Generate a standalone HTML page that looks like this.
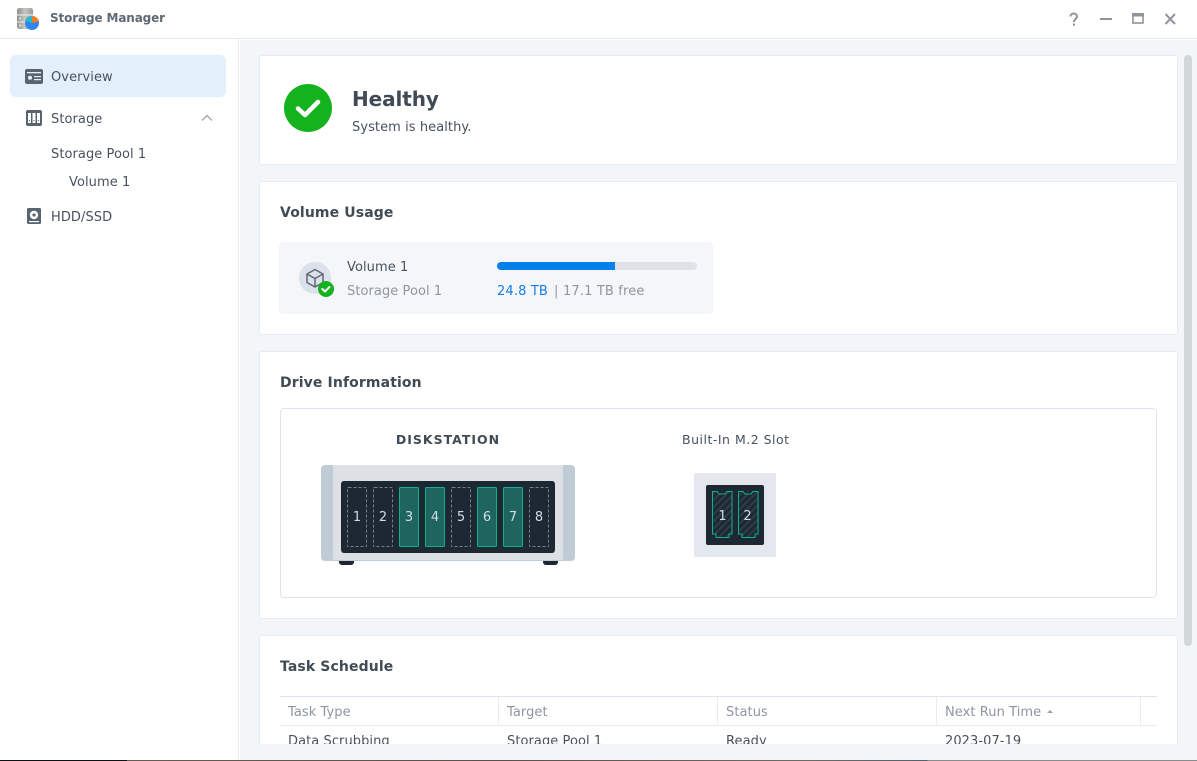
<!DOCTYPE html>
<html><head><meta charset="utf-8"><style>
*{box-sizing:border-box}
html,body{margin:0;padding:0;width:1197px;height:761px;overflow:hidden;background:#fff}
body{font-family:"DejaVu Sans","Liberation Sans",sans-serif;font-size:13px;letter-spacing:.07px;color:#414b55;position:relative}
.a{position:absolute;white-space:nowrap}
.card{position:absolute;left:259px;width:919px;background:#fff;border:1px solid #e6ecf2;border-radius:3px}
.h{font-weight:bold;font-size:14px;letter-spacing:.12px;color:#414b55;line-height:18px}
.bay{position:absolute;top:6px;width:20px;height:60px;border-radius:1.500px;color:#d3dbe3;font-size:13px;letter-spacing:0;text-align:center;line-height:60px}
.e{border:1px dashed #77808a}
.f{border:1px solid #0db08f;background:#1e655f}
.th{position:absolute;top:697px;height:29px;line-height:31px;color:#8e969e;padding-left:8px;border-right:1px solid #e6ecf2}
</style></head><body>
<div class="a" style="left:0;top:0;width:1197px;height:39px;background:#fff;border-bottom:1px solid #e3e9f0"></div>
<svg class="a" style="left:16px;top:7px" width="24" height="24" viewBox="0 0 24 24">
<defs><linearGradient id="g" x1="0" x2="1" y1="0" y2="0"><stop offset="0" stop-color="#8f8f8c"/><stop offset=".5" stop-color="#c6c6c2"/><stop offset="1" stop-color="#9a9a97"/></linearGradient></defs>
<rect x="1" y="1" width="16" height="21" rx="2.500" fill="url(#g)"/><rect x="1" y="7.500" width="16" height="1" fill="#f2f2f0"/><rect x="1" y="14.500" width="16" height="1" fill="#f2f2f0"/><circle cx="4" cy="11.500" r="1" fill="#eee"/><circle cx="4" cy="18.500" r="1" fill="#eee"/>
<circle cx="16" cy="16" r="7" fill="#2e86ee"/><path d="M16 16 L16 9 A7 7 0 0 1 22.800 14.500Z" fill="#f47a20"/><path d="M16 16 L16 9 A7 7 0 0 0 9.300 14Z" fill="#2cb6c9"/></svg>
<div class="a" style="left:50px;top:10px;font-weight:bold;font-size:12px;letter-spacing:-.13px;line-height:17px;color:#5f6873">Storage Manager</div>
<svg class="a" style="left:1060px;top:8px" width="125" height="22" viewBox="0 0 125 22" fill="none" stroke="#8f959c" stroke-width="2">
<path d="M10.500 8.500c0-4 6.500-4 6.500 0 0 2.500-3 2.500-3 5.500" stroke-width="2"/><rect x="13" y="15.500" width="2" height="2.200" fill="#8f959c" stroke="none"/>
<path d="M40 11h12"/><rect x="73" y="6" width="10" height="9" stroke-width="1.600"/><rect x="72" y="5" width="12" height="3.500" fill="#8f959c" stroke="none"/>
<path d="M105.500 6l9.500 10M115 6l-9.500 10"/></svg>

<div class="a" style="left:0;top:39px;width:239px;height:721px;background:#fff;border-right:1px solid #e3e9f0"></div>
<div class="a" style="left:10px;top:55px;width:216px;height:42px;background:#e3effb;border-radius:6px"></div>
<svg class="a" style="left:25px;top:69px" width="18" height="15" viewBox="0 0 18 15"><rect width="18" height="15" rx="2" fill="#5a6470"/><rect x="2" y="3" width="14" height="1.300" fill="#e3effb"/><circle cx="5" cy="8.700" r="2" fill="#e3effb"/><rect x="9" y="7" width="7" height="1.200" fill="#e3effb"/><rect x="9" y="10" width="7" height="1.200" fill="#e3effb"/></svg>
<div class="a" style="left:51px;top:69px;line-height:18px;color:#48525e">Overview</div>
<svg class="a" style="left:26px;top:110px" width="16" height="16" viewBox="0 0 16 16"><rect width="16" height="16" rx="2" fill="#5a6470"/><rect x="2" y="3" width="3" height="10" fill="#fff"/><rect x="6.500" y="3" width="3" height="10" fill="#fff"/><rect x="11" y="3" width="3" height="10" fill="#fff"/><rect x="3" y="10" width="1" height="1" fill="#5a6470"/><rect x="7.500" y="10" width="1" height="1" fill="#5a6470"/><rect x="12" y="10" width="1" height="1" fill="#5a6470"/></svg>
<div class="a" style="left:51px;top:111px;line-height:18px;color:#48525e">Storage</div>
<svg class="a" style="left:201px;top:114px" width="12" height="8" viewBox="0 0 12 8" fill="none" stroke="#a5abb1" stroke-width="1.500"><path d="M1 6.500l5-5 5 5"/></svg>
<div class="a" style="left:51px;top:146px;line-height:18px;color:#48525e">Storage Pool 1</div>
<div class="a" style="left:69px;top:174px;line-height:18px;color:#48525e">Volume 1</div>
<svg class="a" style="left:27px;top:208px" width="14" height="16" viewBox="0 0 14 16"><rect width="14" height="16" rx="1.500" fill="#5a6470"/><circle cx="7" cy="7" r="4.200" fill="#fff"/><circle cx="7" cy="7" r="1.600" fill="#5a6470"/><rect x="2" y="13" width="10" height="1.200" fill="#fff"/></svg>
<div class="a" style="left:51px;top:209px;line-height:18px;color:#48525e">HDD/SSD</div>

<div class="a" style="left:240px;top:40px;width:957px;height:720px;background:#f3f6f9"></div>
<div class="a" style="left:1184px;top:55px;width:8px;height:591px;background:#d2d7d9;border-radius:4px"></div>

<div class="card" style="top:55px;height:110px"></div>
<svg class="a" style="left:284px;top:84px" width="48" height="48" viewBox="0 0 48 48"><circle cx="24" cy="24" r="24" fill="#14b31e"/><path d="M14 24.500l7 6.500 13-13" fill="none" stroke="#fff" stroke-width="4.500" stroke-linecap="round" stroke-linejoin="round"/></svg>
<div class="a" style="left:352px;top:85px;font-weight:bold;font-size:20px;letter-spacing:-.1px;line-height:28px;color:#414b55">Healthy</div>
<div class="a" style="left:352px;top:119px;line-height:18px;color:#48525e">System is healthy.</div>

<div class="card" style="top:181px;height:154px"></div>
<div class="a h" style="left:280px;top:204px">Volume Usage</div>
<div class="a" style="left:279px;top:242px;width:434px;height:72px;background:#f5f6fa;border-radius:4px"></div>
<svg class="a" style="left:299px;top:262px" width="36" height="36" viewBox="0 0 36 36"><circle cx="16" cy="16" r="16" fill="#dce2e9"/><path d="M16 7.500l8 4.500v8.500l-8 4.500-8-4.500V12zM8 12l8 4.500 8-4.500M16 16.500V25" fill="none" stroke="#5f6873" stroke-width="1.500" stroke-linejoin="round"/><circle cx="27" cy="27" r="8" fill="#14b31e"/><path d="M23.300 27l2.700 2.500 4.500-4.500" fill="none" stroke="#fff" stroke-width="2" stroke-linecap="round" stroke-linejoin="round"/></svg>
<div class="a" style="left:347px;top:259px;line-height:18px;color:#48525e">Volume 1</div>
<div class="a" style="left:347px;top:283px;line-height:18px;color:#8e969e">Storage Pool 1</div>
<div class="a" style="left:497px;top:262px;width:200px;height:8px;background:#dfe2e6;border-radius:4px;overflow:hidden"><div style="width:118px;height:8px;background:#057fea"></div></div>
<div class="a" style="left:497px;top:283px;line-height:18px;color:#8e969e"><span style="color:#1a7cea;letter-spacing:.15px">24.8 TB</span><span class="a" style="left:57px;top:0">|</span><span class="a" style="left:66px;top:0;letter-spacing:.15px">17.1 TB free</span></div>

<div class="card" style="top:351px;height:268px"></div>
<div class="a h" style="left:280px;top:374px">Drive Information</div>
<div class="a" style="left:280px;top:408px;width:877px;height:190px;border:1px solid #dfe5ec;border-radius:4px"></div>
<div class="a" style="left:321px;top:431px;width:254px;text-align:center;font-weight:bold;font-size:12.500px;letter-spacing:1px;line-height:17px;color:#414b55">DISKSTATION</div>
<div class="a" style="left:682px;top:431px;font-size:12.500px;letter-spacing:.5px;line-height:17px;color:#48525e">Built-In M.2 Slot</div>

<div class="a" style="left:339px;top:558px;width:15px;height:7px;background:#1e2730;border-radius:0 0 3px 3px"></div>
<div class="a" style="left:543px;top:558px;width:15px;height:7px;background:#1e2730;border-radius:0 0 3px 3px"></div>
<div class="a" style="left:321px;top:465px;width:254px;height:96px;background:#c0cbd5;border-radius:4px"></div>
<div class="a" style="left:333px;top:465px;width:230px;height:95px;background:#dde1e5;border-radius:0 0 2px 2px"></div>
<div class="a" style="left:341px;top:481px;width:214px;height:72px;background:#1e2833;border-radius:3px">
<div class="bay e" style="left:6px">1</div><div class="bay e" style="left:32px">2</div><div class="bay f" style="left:58px">3</div><div class="bay f" style="left:84px">4</div><div class="bay e" style="left:110px">5</div><div class="bay f" style="left:136px">6</div><div class="bay f" style="left:162px">7</div><div class="bay e" style="left:188px">8</div>
</div>

<div class="a" style="left:694px;top:473px;width:82px;height:84px;background:#e4e7ee;border-radius:2px"></div>
<div class="a" style="left:706px;top:485px;width:58px;height:60px;background:#1e2833;border-radius:2px"></div>
<svg class="a" style="left:706px;top:485px" width="58" height="60" viewBox="0 0 58 60">
<defs><pattern id="p" width="5" height="5" patternUnits="userSpaceOnUse" patternTransform="rotate(45)"><rect width="5" height="5" fill="#1e2833"/><rect width="2" height="5" fill="#2c3e45"/></pattern></defs>
<path d="M6.500 6.500H11l2 2.500h6l2-2.500h5V49h-3v3.500H10V49H6.500z" fill="url(#p)" stroke="#0db08f" stroke-width="1"/>
<path d="M32.500 6.500H37l2 2.500h6l2-2.500h5V49h-3v3.500H36V49h-3.500z" fill="url(#p)" stroke="#0db08f" stroke-width="1"/>
<text x="16.500" y="35" font-family="DejaVu Sans" font-size="13" fill="#d3dbe3" text-anchor="middle">1</text><text x="41.500" y="35" font-family="DejaVu Sans" font-size="13" fill="#d3dbe3" text-anchor="middle">2</text></svg>

<div class="card" style="top:635px;height:125px"></div>
<div class="a h" style="left:280px;top:658px">Task Schedule</div>
<div class="a" style="left:280px;top:696px;width:877px;height:1px;background:#dfe5ec"></div>
<div class="a" style="left:280px;top:725px;width:877px;height:1px;background:#e6ecf2"></div>
<div class="th" style="left:280px;width:219px">Task Type</div>
<div class="th" style="left:499px;width:219px">Target</div>
<div class="th" style="left:718px;width:219px">Status</div>
<div class="th" style="left:937px;width:204px">Next Run Time<span class="a" style="left:110px;top:13px;width:0;height:0;border-left:3.500px solid transparent;border-right:3.500px solid transparent;border-bottom:3.500px solid #9aa0a6"></span></div>
<div class="a" style="left:288px;top:733px;line-height:18px;color:#48525e">Data Scrubbing</div>
<div class="a" style="left:507px;top:733px;line-height:18px;color:#48525e">Storage Pool 1</div>
<div class="a" style="left:726px;top:733px;line-height:18px;color:#48525e">Ready</div>
<div class="a" style="left:945px;top:733px;line-height:18px;color:#48525e">2023-07-19</div>
<div class="a" style="left:240px;top:744px;width:957px;height:16px;background:#f3f6f9"></div>
<div class="a" style="left:0;top:760px;width:1197px;height:1px;background:linear-gradient(90deg,#0d1114 0,#0d1114 127px,#6a5a50 127px,#5d5048 500px,#6e6a62 800px,#55606a 927px,#8a8a88 928px,#8a8a88 100%)"></div>
</body></html>
